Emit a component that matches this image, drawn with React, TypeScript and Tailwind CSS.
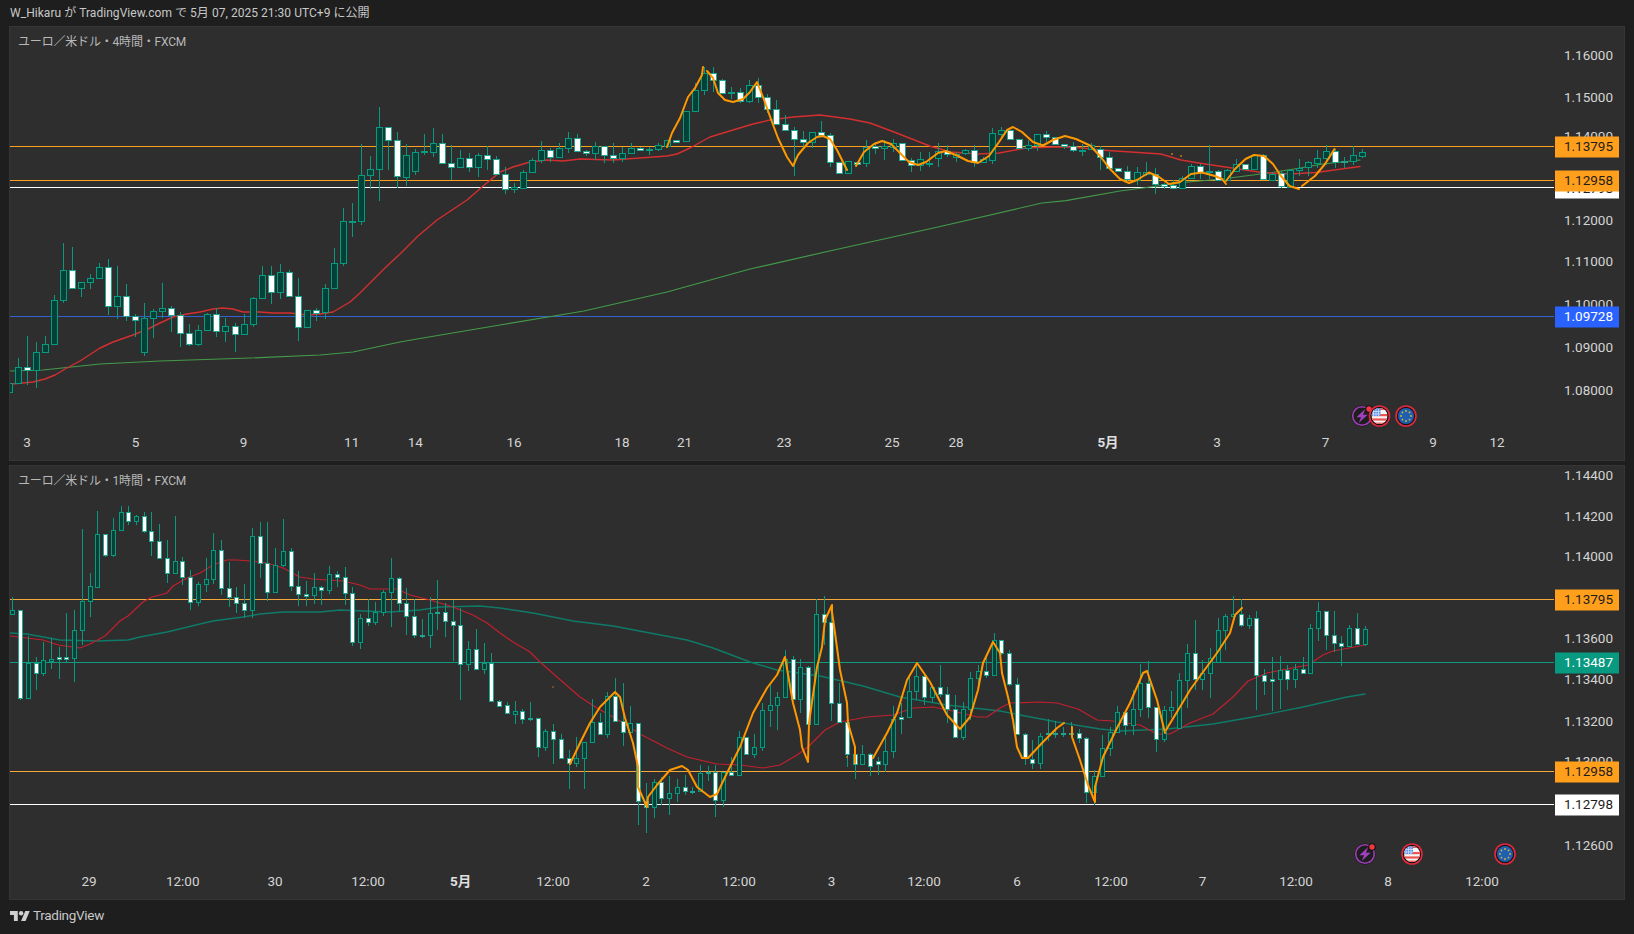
import * as React from "react";

// [wick top, body top, body bottom, wick bottom, 1 = falling (white) candle]. All y in page px.
type Candle = [number, number, number, number, number];
type Pt = [number, number];

const CANDLES_4H: Candle[] = [
  [383,383,392,392,0],[358,367,383,384,0],[336,367,370,385,1],[342,352,370,388,0],[336,344,352,353,0],
  [295,300,344,345,0],[243,270,300,303,0],[247,270,288,289,1],[282,282,288,297,0],[274,278,282,289,0],
  [263,267,278,279,0],[259,267,306,315,1],[266,296,306,319,0],[284,296,316,321,1],[314,316,320,337,1],
  [303,318,352,356,0],[309,311,318,338,0],[283,308,311,318,0],[306,308,315,332,1],[312,315,333,347,1],
  [324,333,344,346,1],[325,330,344,346,0],[313,314,330,330,0],[308,314,331,337,1],[318,326,331,342,0],
  [323,326,334,352,1],[314,324,334,335,0],[297,298,324,327,0],[266,275,298,299,0],[266,275,292,304,1],
  [264,272,292,299,0],[270,272,296,297,1],[278,296,327,341,1],[310,310,327,327,0],[308,310,313,321,1],
  [284,288,312,319,0],[248,263,288,289,0],[208,221,263,266,0],[203,221,222,237,0],[144,175,221,225,0],
  [156,169,175,189,0],[107,127,169,201,0],[127,127,140,170,1],[132,140,176,188,1],[144,155,177,186,0],
  [149,152,171,175,0],[134,151,152,155,0],[128,143,152,157,0],[134,143,163,164,1],[145,163,167,180,1],
  [150,158,167,167,0],[153,158,167,172,1],[153,155,167,177,0],[146,155,159,170,1],[156,159,174,174,1],
  [167,174,189,194,1],[183,187,189,193,0],[170,172,188,188,0],[158,160,172,173,0],[141,150,160,163,0],
  [148,150,157,162,1],[143,148,157,158,0],[132,138,148,153,0],[134,138,151,152,1],[150,151,153,156,1],
  [142,146,153,160,0],[146,146,155,163,1],[143,155,158,163,1],[147,153,158,162,0],[143,148,153,153,0],
  [147,148,150,151,1],[147,149,150,155,0],[143,145,149,151,0],[140,140,146,147,0],[140,140,142,142,1],
  [111,111,141,141,0],[83,90,111,112,0],[67,73,90,95,0],[67,73,80,92,1],[79,80,93,93,1],
  [87,92,93,99,0],[88,92,101,103,1],[80,85,101,103,0],[78,85,97,103,1],[94,97,109,113,1],
  [100,109,124,125,1],[115,124,130,131,1],[127,130,139,176,1],[131,139,142,149,1],[132,132,142,148,0],
  [121,132,135,137,1],[133,135,162,167,1],[162,162,173,174,1],[161,161,173,174,0],[162,162,164,165,1],
  [140,147,163,167,0],[142,146,148,154,1],[140,146,148,160,0],[139,143,147,152,0],[143,143,160,161,1],
  [158,160,165,172,1],[152,159,165,171,0],[152,163,164,167,0],[143,151,158,167,0],[145,151,154,157,1],
  [152,154,157,162,0],[149,150,153,155,0],[145,150,162,167,1],[157,159,162,163,0],[128,133,160,164,0],
  [127,130,134,139,0],[130,130,139,139,1],[139,139,148,148,1],[140,145,148,151,0],[134,134,145,151,0],
  [131,134,137,142,1],[137,137,144,144,1],[144,144,146,149,1],[142,146,150,152,1],[144,150,151,156,0],
  [143,145,149,150,0],[146,149,157,170,1],[152,157,168,169,1],[168,168,171,171,1],[166,171,179,181,1],
  [167,172,180,185,0],[162,172,174,176,0],[168,174,184,194,1],[183,184,186,189,1],[180,185,188,188,1],
  [176,178,188,189,0],[164,166,178,179,0],[164,166,172,179,1],[145,171,172,179,0],[170,171,180,181,1],
  [169,170,180,181,0],[159,164,171,172,0],[164,164,169,170,1],[154,155,169,170,0],[154,155,179,180,1],
  [172,174,180,180,0],[171,173,186,188,1],[169,170,187,188,0],[159,168,170,176,0],[161,162,167,176,0],
  [150,158,163,168,0],[145,151,158,165,0],[149,151,162,168,1],[157,161,162,168,1],[146,155,161,165,0],
  [149,152,156,158,0],
];

const CANDLES_1H: Candle[] = [
  [597,610,614,615,0],[610,610,698,700,1],[636,663,698,699,0],[657,663,673,690,1],[642,660,673,676,0],
  [638,659,661,669,0],[647,657,659,679,1],[613,657,659,662,1],[610,630,658,682,0],[529,601,630,645,0],
  [573,586,601,617,0],[511,534,587,588,0],[534,534,555,557,1],[518,530,555,557,0],[506,512,530,531,0],
  [506,512,521,525,1],[515,516,521,525,0],[512,516,531,533,1],[512,531,541,556,1],[524,541,558,559,1],
  [540,558,573,583,1],[516,561,573,573,0],[557,561,577,585,1],[570,577,602,610,1],[582,584,602,606,0],
  [558,579,584,592,0],[533,550,579,584,0],[540,550,588,595,1],[562,588,597,607,1],[587,597,603,613,1],
  [584,603,610,618,1],[528,536,610,618,0],[522,536,563,578,1],[522,563,592,601,1],[548,565,592,593,0],
  [519,551,565,567,0],[548,551,586,591,1],[571,586,594,606,1],[581,594,596,606,1],[573,587,595,604,0],
  [586,587,590,605,1],[566,574,590,594,0],[571,574,577,587,1],[567,577,593,605,1],[587,593,642,646,1],
  [614,618,642,649,0],[599,618,622,626,1],[602,612,622,625,0],[590,592,612,616,0],[558,578,592,627,0],
  [577,578,603,612,1],[588,603,616,635,1],[599,616,635,638,1],[619,635,636,638,1],[597,613,635,648,0],
  [580,612,613,630,1],[603,612,621,637,1],[600,621,625,661,1],[608,625,664,700,1],[641,649,664,671,0],
  [629,649,669,670,1],[643,663,669,674,0],[653,663,701,702,1],[700,701,706,707,1],[702,705,713,714,1],
  [701,711,714,724,0],[709,711,719,724,1],[702,718,719,721,1],[718,718,747,757,1],[729,731,747,751,0],
  [724,731,739,764,1],[734,739,758,759,1],[750,758,763,789,1],[737,758,763,767,0],[742,742,758,789,0],
  [699,722,742,743,0],[713,722,734,735,1],[692,696,734,738,0],[678,696,721,722,1],[683,721,732,746,1],
  [706,723,732,733,0],[723,723,801,825,1],[783,801,807,833,1],[779,782,807,818,0],[777,782,798,805,1],
  [776,793,798,815,0],[779,787,793,802,0],[775,787,791,795,1],[787,791,792,794,1],[765,773,791,792,0],
  [766,772,773,781,1],[765,772,800,817,1],[772,772,800,807,0],[757,772,775,776,1],[731,737,775,776,0],
  [737,737,754,755,1],[734,747,754,758,0],[703,710,747,751,0],[685,705,710,727,0],[692,697,705,730,0],
  [650,659,697,698,0],[656,659,699,700,1],[659,667,699,713,0],[666,667,724,725,1],[599,614,724,725,0],
  [596,614,622,645,1],[610,622,703,721,1],[683,703,722,723,1],[722,722,754,767,1],[753,754,764,779,1],
  [745,754,764,765,0],[753,754,766,776,1],[757,761,764,775,1],[735,751,764,772,0],[706,719,751,758,0],
  [703,717,719,734,1],[675,691,717,718,0],[665,676,691,700,0],[673,676,697,705,1],[685,687,697,703,0],
  [665,687,694,697,1],[687,694,709,723,1],[695,709,737,738,1],[702,709,737,740,0],[672,678,709,720,0],
  [665,671,678,687,0],[657,671,675,678,1],[633,640,675,676,0],[640,640,653,655,1],[650,653,684,686,1],
  [678,684,734,735,1],[733,734,758,765,1],[740,759,763,769,1],[733,736,763,769,0],[719,733,734,741,1],
  [721,733,734,738,1],[727,733,734,737,1],[722,733,734,737,1],[729,733,738,743,1],[737,738,792,803,1],
  [770,776,792,805,0],[735,748,776,777,0],[727,732,748,756,0],[706,712,732,733,0],[710,712,725,735,1],
  [690,709,725,735,0],[664,683,709,717,0],[661,683,707,718,1],[707,707,739,752,1],[706,710,739,742,0],
  [691,707,710,718,0],[673,680,728,728,0],[644,653,680,708,0],[620,653,679,690,1],[660,673,679,690,0],
  [648,658,673,698,0],[618,630,662,662,0],[614,616,630,650,0],[596,614,616,617,0],[599,614,625,627,1],
  [615,618,625,629,0],[611,618,675,710,1],[669,675,681,695,1],[657,679,681,711,1],[656,670,679,709,0],
  [665,670,679,690,1],[664,669,679,688,0],[657,669,673,674,1],[624,628,673,674,0],[602,611,628,641,0],
  [611,611,635,650,1],[611,635,643,652,1],[636,643,646,666,1],[625,628,646,647,0],[613,628,644,645,1],
  [626,629,644,646,0],
];

const RED_4H: Pt[] = [[12,384],[33,382],[45,379],[55,375],[67,368],[80,361],[100,348],[113,342],[133,335],[150,328],[160,323],[173,317],[187,314],[200,312],[213,309],[223,308],[233,309],[243,312],[260,312],[273,313],[290,313],[307,315],[320,314],[333,312],[350,302],[360,293],[373,280],[387,266],[400,254],[418,236],[437,220],[467,200],[482,187],[500,172],[513,167],[530,162],[547,160],[563,161],[580,159],[613,160],[640,158],[667,156],[677,154],[690,148],[710,137],[733,130],[753,124],[770,120],[793,117],[820,115],[850,119],[870,123],[894,132],[931,146.5],[951,152],[978,154],[999,153],[1026,148],[1053,147],[1073,147],[1100,150],[1131,152],[1161,154],[1181,160],[1205,164],[1232,168],[1262,172.5],[1289,174],[1316,172.5],[1360,166.5]];
const GREEN_4H: Pt[] = [[10,371],[43,370],[100,364],[160,361],[250,358],[320,355],[353,352],[400,342],[417,339],[500,325],[584,311],[667,292],[750,269],[834,250],[938,227],[1042,203],[1066,200.6],[1120,191],[1188,182],[1222,179],[1272,172.5],[1300,168],[1323,164],[1360,160]];
const ORANGE_4H: Pt[][] = [
  [[667,147],[672,133],[680,118],[688,97],[695,88],[702,75],[703,67]],
  [[707,71],[713,78],[718,93],[725,100],[733,102],[743,99],[750,92],[757,82],[763,97],[772,122],[778,138],[787,157],[793,166],[798,155],[808,143],[817,137],[823,136],[830,139],[837,150],[847,170]],
  [[856,166],[864,152],[874,144],[882,141],[891,144],[901,154],[909,162],[918,165],[926,162],[938,153],[946,151],[958,156],[968,161],[978,163],[989,156],[999,142],[1007,130],[1013,127],[1022,132],[1033,142],[1043,145.5],[1053,140],[1065,136],[1076,139],[1090,145.5],[1100,156],[1110,169],[1120,179],[1129,183],[1137,180],[1149,172.5],[1159,177],[1169,184],[1180,182],[1191,174],[1202,172.5],[1215,176],[1222,179],[1226,184]],
  [[1226,181],[1235,169],[1245.5,159],[1254,155],[1264,156],[1273,164],[1281,176],[1289.5,186],[1299,189]],
  [[1302,186],[1315,176],[1325,164],[1334.5,149]],
];

const RED_1H: Pt[] = [[10,636],[43,640],[58,645],[80,648],[90,644],[105,636],[120,621],[128,616],[143,602],[152,597],[167,593],[173,586],[187,578],[200,573],[213,565],[227,560],[237,560],[250,561],[267,563],[283,568],[300,577],[313,579],[343,581],[360,585],[370,589],[397,589],[410,595],[430,600],[453,607],[473,615],[487,623],[500,633],[513,642],[530,652],[540,662],[557,677],[580,697],[597,708],[620,721],[640,734],[667,748],[687,757],[717,764],[740,765],[763,768],[780,765],[797,755],[808,747],[825,730],[840,722],[867,717],[893,715],[913,708],[933,707],[953,711],[977,717],[987,717],[1000,708],[1010,703],[1040,702],[1057,703],[1078,709],[1097,720],[1113,721],[1140,725],[1157,734],[1170,734],[1190,723],[1213,714],[1233,697],[1248,681],[1267,673],[1287,669],[1308,665],[1323,655],[1333,651],[1365,645]];
const TEAL_1H: Pt[] = [[10,633],[27,634],[60,640],[97,641],[128,640],[140,637],[167,632],[200,624],[213,621],[243,617],[260,614],[283,612],[320,612],[340,610],[363,611],[390,612],[420,610],[440,607],[480,606],[500,608],[533,613],[573,621],[613,626],[650,633],[687,640],[713,648],[750,662],[777,670],[820,676],[863,686],[900,697],[947,705],[1000,711],[1020,715],[1057,722],[1100,729],[1120,731],[1167,729],[1213,724],[1253,717],[1303,707],[1347,697],[1365,694]];
const ORANGE_1H: Pt[][] = [
  [[570,764],[580,743],[590,723],[600,707],[607,700],[615,692],[620,697],[625,718],[633,743],[638,767],[638,787],[647,807],[648,797],[657,785],[670,770],[682,766],[688,770],[697,787],[710,797],[717,794],[727,773],[740,747],[753,713],[767,688],[777,675],[785,657],[793,703],[800,730],[802,747],[808,762],[809,723],[817,667],[822,647],[825,620],[832,605],[832,612],[835,633],[840,670],[847,703],[848,723],[855,747],[855,763]],
  [[873,758],[887,733],[897,713],[907,680],[917,663],[930,682],[947,715],[960,729],[970,717],[978,690],[983,663],[993,642],[1000,653],[1002,673],[1008,697],[1013,720],[1017,747],[1022,758],[1028,758],[1043,742],[1057,728],[1064,723]],
  [[1072,727],[1072,737],[1080,760],[1088,785],[1095,802],[1095,787],[1103,757],[1117,728],[1130,703],[1143,673],[1147,671],[1157,700],[1165,733]],
  [[1166,730],[1180,707],[1190,690],[1203,672],[1217,653],[1230,633],[1235,615],[1242,608]],
];

const pts = (p: Pt[]) => p.map(([x, y]) => `${x},${y}`).join(" ");

function Candles({ data, x0, dx, w }: { data: Candle[]; x0: number; dx: number; w: number }) {
  return (
    <g shapeRendering="crispEdges">
      {data.map(([wt, bt, bb, wb, down], i) => {
        const cx = Math.round(x0 + dx * i);
        const h = Math.max(bb - bt, 1);
        return (
          <g key={i}>
            <rect x={cx} y={wt} width={1} height={wb - wt} fill="#089981" />
            <rect
              x={cx - (w - 1) / 2}
              y={bt + 0.5}
              width={w - 1}
              height={h}
              fill={down ? "#ffffff" : "#004238"}
              stroke={down ? "#1fa58f" : "#089981"}
            />
          </g>
        );
      })}
    </g>
  );
}

function Line({ p, color, width }: { p: Pt[]; color: string; width: number }) {
  return <polyline points={pts(p)} fill="none" stroke={color} strokeWidth={width} strokeLinejoin="round" strokeLinecap="round" />;
}

function HLine({ y, color }: { y: number; color: string }) {
  return <rect x={10} y={y} width={1544} height={1} fill={color} shapeRendering="crispEdges" />;
}

function Bolt({ x, y }: { x: number; y: number }) {
  return (
    <g transform={`translate(${x} ${y})`}>
      <circle r={10.5} fill="#131313" />
      <circle r={9.3} fill="#1e1e1e" stroke="#9c3fb5" strokeWidth={1.6} />
      <path d="M3.2 -7 L-5.6 1.2 L-1 1.2 L-3.2 7 L5.6 -1.2 L1 -1.2 Z" fill="#a040c0" />
      <circle cx={7} cy={-7} r={3.8} fill="#131313" />
      <circle cx={7} cy={-7} r={2.7} fill="#f23645" />
    </g>
  );
}

function UsFlag({ x, y }: { x: number; y: number }) {
  const id = `us-${x}`;
  return (
    <g transform={`translate(${x} ${y})`}>
      <circle r={10.8} fill="#e5283c" />
      <circle r={9.2} fill="#131313" />
      <clipPath id={id}>
        <circle r={8} />
      </clipPath>
      <g clipPath={`url(#${id})`}>
        <rect x={-8} y={-8} width={16} height={16} fill="#f5f5f5" />
        <rect x={-8} y={-2} width={16} height={2.2} fill="#ef5350" />
        <rect x={-8} y={2.4} width={16} height={2.2} fill="#ef5350" />
        <rect x={-8} y={6.6} width={16} height={2} fill="#ef5350" />
        <rect x={-8} y={-8} width={16} height={2} fill="#ef5350" />
        <rect x={-8} y={-8} width={9} height={8} fill="#5b8fe8" />
        <path d="M-6 -6.5V0M-3.5 -7V0M-1 -7V0M-8 -4.5H1M-8 -2H1" stroke="#cfe0fa" strokeWidth={0.8} />
      </g>
    </g>
  );
}

function EuFlag({ x, y }: { x: number; y: number }) {
  return (
    <g transform={`translate(${x} ${y})`}>
      <circle r={10.8} fill="#e5283c" />
      <circle r={9.2} fill="#131313" />
      <circle r={8} fill="#1f5fb0" />
      {[0, 45, 90, 135, 180, 225, 270, 315].map((a) => (
        <circle key={a} cx={5 * Math.cos((a * Math.PI) / 180)} cy={5 * Math.sin((a * Math.PI) / 180)} r={0.9} fill="#d9b93a" />
      ))}
    </g>
  );
}

type PriceTag = { y: number; text: string; bg: string; fg: string };

function PriceScale({ top, labels, tags }: { top: number; labels: [number, string][]; tags: PriceTag[] }) {
  return (
    <div className="relative w-[69px] shrink-0">
      {labels.map(([y, text]) => (
        <span key={text} className="absolute right-[11px] -translate-y-1/2 text-[13.5px] leading-none text-[#d4d4d4]" style={{ top: y - top + 0.5 }}>
          {text}
        </span>
      ))}
      {tags.map((t) => (
        <span
          key={t.text}
          className="absolute left-0 flex h-[21px] w-[64px] -translate-y-1/2 items-center justify-end pr-[6px] text-[13.5px] leading-none"
          style={{ top: t.y - top, background: t.bg, color: t.fg }}
        >
          {t.text}
        </span>
      ))}
    </div>
  );
}

function TimeAxis({ labels }: { labels: [number, string, boolean?][] }) {
  return (
    <div className="relative h-[29px]">
      {labels.map(([x, text, bold], i) => (
        <span
          key={i}
          className={`absolute top-[5px] -translate-x-1/2 text-[13.5px] leading-none ${bold ? "font-bold text-[#e0e0e0]" : "text-[#d4d4d4]"}`}
          style={{ left: x - 10 }}
        >
          {text}
        </span>
      ))}
    </div>
  );
}

function Panel({ top, title, labels, tags, times, children }: {
  top: number;
  title: string;
  labels: [number, string][];
  tags: PriceTag[];
  times: [number, string, boolean?][];
  children: React.ReactNode;
}) {
  return (
    <section className="flex h-[435px] w-[1616px] flex-col border border-[#363636] bg-[#2e2e2e]">
      <div className="flex h-[404px]">
        <div className="relative w-[1545px] shrink-0">
          <svg width={1545} height={404} viewBox={`10 ${top} 1545 404`} className="block">
            {children}
          </svg>
          <span className="absolute left-[8px] top-[7px] text-[12px] leading-[16px] tracking-[-0.18px] text-[#b8b8b8]">{title}</span>
        </div>
        <PriceScale top={top} labels={labels} tags={tags} />
      </div>
      <TimeAxis labels={times} />
    </section>
  );
}

const ORANGE = "#ff9f1c";

export default function App() {
  return (
    <div className="flex h-[934px] w-[1634px] flex-col overflow-hidden bg-[#1e1e1e] font-['Roboto','Noto_Sans_CJK_JP',sans-serif]">
      <header className="flex h-[26px] items-center pl-[10px] text-[12px] tracking-[0.04px] text-[#c8c8c8]">
        W_Hikaru が TradingView.com で 5月 07, 2025 21:30 UTC+9 に公開
      </header>

      <main className="flex flex-col gap-[4px] pl-[9px]">
        <Panel
          top={27}
          title="ユーロ／米ドル・4時間・FXCM"
          labels={[[55,"1.16000"],[97,"1.15000"],[136,"1.14000"],[220,"1.12000"],[261.5,"1.11000"],[304,"1.10000"],[347,"1.09000"],[390,"1.08000"]]}
          tags={[
            { y: 188, text: "1.12798", bg: "#ffffff", fg: "#1c1c1c" },
            { y: 146.5, text: "1.13795", bg: ORANGE, fg: "#1c1c1c" },
            { y: 180.5, text: "1.12958", bg: ORANGE, fg: "#1c1c1c" },
            { y: 316.5, text: "1.09728", bg: "#2962ff", fg: "#ffffff" },
          ]}
          times={[[27,"3"],[135.5,"5"],[243.5,"9"],[351.7,"11"],[415.3,"14"],[514,"16"],[622,"18"],[684.6,"21"],[784,"23"],[892,"25"],[956,"28"],[1108,"5月",true],[1217,"3"],[1325.6,"7"],[1433,"9"],[1497,"12"]]}
        >
          <HLine y={146} color={ORANGE} />
          <HLine y={180} color={ORANGE} />
          <HLine y={187} color="#ffffff" />
          <HLine y={316} color="#3461d0" />
          <Line p={GREEN_4H} color="#439a4a" width={1.2} />
          <Line p={RED_4H} color="#d32f2f" width={1.4} />
          <Candles data={CANDLES_4H} x0={9} dx={9.02} w={7} />
          {ORANGE_4H.map((p, i) => (
            <Line key={i} p={p} color="#ff9800" width={2} />
          ))}
          <circle cx={1172} cy={154} r={1} fill="#c77a10" />
          <circle cx={1181} cy={156} r={1} fill="#c77a10" />
          <Bolt x={1362} y={416} />
          <UsFlag x={1379.5} y={416} />
          <EuFlag x={1406} y={416} />
        </Panel>

        <Panel
          top={466}
          title="ユーロ／米ドル・1時間・FXCM"
          labels={[[475,"1.14400"],[516,"1.14200"],[556.5,"1.14000"],[638.5,"1.13600"],[679.5,"1.13400"],[721,"1.13200"],[761.7,"1.13000"],[845,"1.12600"]]}
          tags={[
            { y: 599.5, text: "1.13795", bg: ORANGE, fg: "#1c1c1c" },
            { y: 662.5, text: "1.13487", bg: "#089981", fg: "#ffffff" },
            { y: 771.5, text: "1.12958", bg: ORANGE, fg: "#1c1c1c" },
            { y: 804.5, text: "1.12798", bg: "#ffffff", fg: "#1c1c1c" },
          ]}
          times={[[89,"29"],[182.7,"12:00"],[275,"30"],[368,"12:00"],[460.6,"5月",true],[553,"12:00"],[646,"2"],[739,"12:00"],[831.6,"3"],[924,"12:00"],[1017,"6"],[1111,"12:00"],[1202.6,"7"],[1296,"12:00"],[1388,"8"],[1482,"12:00"]]}
        >
          <HLine y={599} color="#f5a83a" />
          <HLine y={662} color="#119a82" />
          <HLine y={771} color="#f5a83a" />
          <HLine y={804} color="#ffffff" />
          <Line p={TEAL_1H} color="#0f7a68" width={1.4} />
          <Line p={RED_1H} color="#c2202e" width={1.2} />
          <Candles data={CANDLES_1H} x0={12.33} dx={7.727} w={5} />
          {ORANGE_1H.map((p, i) => (
            <Line key={i} p={p} color="#ff9800" width={2} />
          ))}
          <circle cx={553} cy={687} r={0.8} fill="#c77a10" />
          <circle cx={847} cy={757} r={1} fill="#c77a10" />
          <Bolt x={1365} y={854} />
          <UsFlag x={1412} y={854} />
          <EuFlag x={1505} y={854} />
        </Panel>
      </main>

      <footer className="flex flex-1 items-center gap-[4px] pb-[3px] pl-[10px]">
        <svg width={20} height={10} viewBox="0 4 36 18" fill="#d0d0d0" aria-label="TradingView logo">
          <path d="M14 22H7V11H0V4h14v18zM28 22h-8l7.5-18h8L28 22z" />
          <circle cx={20} cy={8} r={4} />
        </svg>
        <span className="-ml-[1px] text-[13.5px] tracking-[-0.3px] text-[#c8c8c8]">TradingView</span>
      </footer>
    </div>
  );
}
